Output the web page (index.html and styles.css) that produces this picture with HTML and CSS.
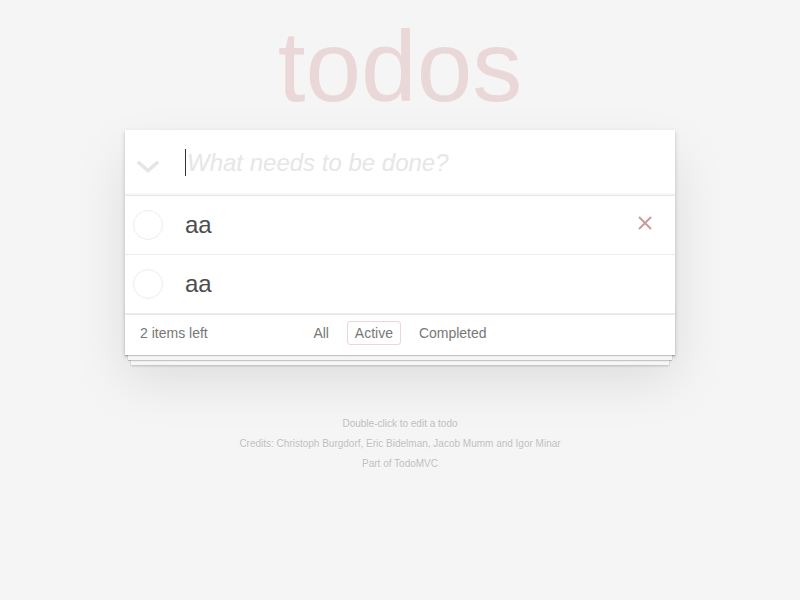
FILE: index.html
```html
<!DOCTYPE html>
<html lang="en">
<head>
<meta charset="utf-8">
<title>TodoMVC</title>
<link rel="stylesheet" href="styles.css">
</head>
<body>
<div class="page">
  <h1 class="title">todos</h1>
  <section class="todoapp">
    <header class="header">
      <span class="toggle-all">
        <svg width="24" height="13" viewBox="0 0 24 13"><polyline points="1.8,1.8 12,10.6 22.2,1.8" fill="none" stroke="#e6e6e6" stroke-width="3.6" stroke-linejoin="miter"/></svg>
      </span>
      <span class="caret"></span>
      <input class="new-todo" placeholder="What needs to be done?">
    </header>
    <ul class="todo-list">
      <li class="todo">
        <span class="toggle"><span class="circle"></span></span>
        <label class="todo-label">aa</label>
        <span class="destroy">
          <svg width="14" height="14" viewBox="0 0 14 14"><path d="M1 1 L13 13 M13 1 L1 13" stroke="#cc9a9a" stroke-width="2" fill="none"/></svg>
        </span>
      </li>
      <li class="todo">
        <span class="toggle"><span class="circle"></span></span>
        <label class="todo-label">aa</label>
      </li>
    </ul>
    <footer class="footer">
      <span class="todo-count"><strong class="count">2</strong> items left</span>
      <ul class="filters">
        <li class="filter"><a class="filter-link">All</a></li>
        <li class="filter"><a class="filter-link selected">Active</a></li>
        <li class="filter"><a class="filter-link">Completed</a></li>
      </ul>
      <span class="spacer"></span>
    </footer>
  </section>
  <footer class="info">
    <p class="info-line">Double-click to edit a todo</p>
    <p class="info-line">Credits: Christoph Burgdorf, Eric Bidelman, Jacob Mumm and Igor Minar</p>
    <p class="info-line">Part of TodoMVC</p>
  </footer>
</div>
</body>
</html>
```
FILE: styles.css
```css
html, body {
  margin: 0;
  padding: 0;
}
body {
  background: #f5f5f5;
  color: #4d4d4d;
  font-family: "Liberation Sans", Arial, sans-serif;
  font-size: 14px;
  line-height: 1.4em;
}
.page {
  max-width: 550px;
  margin: 0 auto;
}
.title {
  margin: 0;
  height: 130px;
  font-size: 100px;
  line-height: 132px;
  font-weight: normal;
  text-align: center;
  color: rgba(175, 47, 47, 0.15);
}
.todoapp {
  background: #fff;
  margin: 0 0 40px 0;
  position: relative;
  box-shadow: 0 2px 4px 0 rgba(0, 0, 0, 0.2), 0 25px 50px 0 rgba(0, 0, 0, 0.1);
}
.header {
  display: flex;
  align-items: stretch;
  height: 65px;
  box-shadow: inset 0 -2px 1px rgba(0, 0, 0, 0.03);
}
.toggle-all {
  width: 60px;
  flex: none;
  display: flex;
  align-items: center;
  padding-left: 11px;
  padding-top: 7px;
  box-sizing: border-box;
}
.toggle-all svg {
  display: block;
}
.caret {
  width: 1px;
  height: 27px;
  align-self: center;
  background: #333;
  flex: none;
}
.new-todo {
  flex: 1;
  min-width: 0;
  margin: 0;
  border: none;
  outline: none;
  background: transparent;
  font-family: "Liberation Sans", Arial, sans-serif;
  font-size: 24px;
  line-height: 33px;
  height: 65px;
  box-sizing: border-box;
  padding: 16px 16px 16px 1px;
  color: inherit;
}
.new-todo::placeholder {
  font-style: italic;
  color: #e6e6e6;
}
.todo-list {
  margin: 0;
  padding: 0;
  list-style: none;
  border-top: 1px solid #e6e6e6;
}
.todo {
  display: flex;
  align-items: stretch;
  font-size: 24px;
  border-bottom: 1px solid #ededed;
}
.toggle {
  width: 60px;
  flex: none;
  display: flex;
  align-items: center;
  padding-left: 8px;
  box-sizing: border-box;
}
.circle {
  width: 28px;
  height: 28px;
  border: 1px solid #ededed;
  border-radius: 50%;
}
.todo-label {
  flex: 1;
  display: block;
  padding: 15px 15px 15px 0;
  line-height: 28px;
}
.destroy {
  width: 40px;
  height: 40px;
  margin-right: 10px;
  align-self: center;
  margin-bottom: 5px;
  display: flex;
  align-items: center;
  justify-content: center;
}
.destroy svg {
  display: block;
}
.footer {
  position: relative;
  color: #777;
  padding: 9px 15px 11px;
  height: 20px;
  border-top: 1px solid #e6e6e6;
  display: grid;
  grid-template-columns: minmax(0, 1fr) auto minmax(0, 1fr);
  align-items: center;
}
.footer::before {
  content: "";
  position: absolute;
  right: 0;
  bottom: 0;
  left: 0;
  height: 50px;
  overflow: hidden;
  box-shadow: 0 1px 1px rgba(0, 0, 0, 0.2), 0 8px 0 -3px #f6f6f6, 0 9px 1px -3px rgba(0, 0, 0, 0.2), 0 16px 0 -6px #f6f6f6, 0 17px 2px -6px rgba(0, 0, 0, 0.2);
}
.todo-count {
  position: relative;
  text-align: left;
}
.count {
  font-weight: normal;
}
.filters {
  position: relative;
  margin: 0;
  padding: 0;
  list-style: none;
  white-space: nowrap;
}
.filter {
  display: inline;
}
.filter-link {
  color: inherit;
  margin: 3px;
  padding: 3px 7px;
  text-decoration: none;
  border: 1px solid transparent;
  border-radius: 3px;
}
.filter-link.selected {
  border-color: rgba(175, 47, 47, 0.2);
}
.info {
  display: block;
  margin: 64px auto 0;
  color: #bfbfbf;
  font-size: 10px;
  text-shadow: 0 1px 0 rgba(255, 255, 255, 0.5);
  text-align: center;
}
.info-line {
  line-height: 1;
  margin: 10px 0;
}
```
